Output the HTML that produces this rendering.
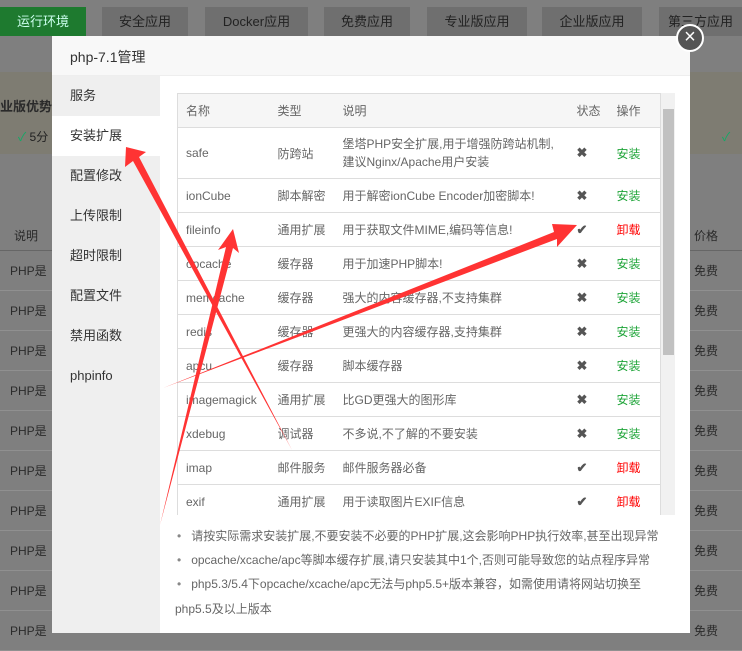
<!DOCTYPE html><html><head><meta charset="utf-8"><style>
*{margin:0;padding:0;box-sizing:border-box}
body{width:742px;height:651px;overflow:hidden;position:relative;background:#7f7f7f;font-family:"Liberation Sans","Noto Sans CJK SC",sans-serif;font-size:12px;color:#555}
.tab{position:absolute;top:7px;height:29px;background:#6f6f6f;color:#222;font-size:13px;text-align:center;line-height:29px}
.bg{position:absolute;color:#2a2a2a;font-size:12px}
.ln{position:absolute;left:0;width:742px;height:1px;background:#909090}
.modal{position:absolute;left:52px;top:36px;width:638px;height:597px;background:#fff}
.hd{height:40px;line-height:42px;padding-left:18px;font-size:14px;color:#333;border-bottom:1px solid #eee;background:#f8f8f8}
.side{position:absolute;left:0;top:40px;width:108px;height:557px;background:#efefef}
.side div{height:40px;line-height:40px;padding-left:18px;font-size:13px;color:#333}
.side .on{background:#fff}
.tw{position:absolute;left:125px;top:57px;width:498px;height:422px;overflow:hidden}
table{border-collapse:collapse;width:484px;border:1px solid #ddd;table-layout:fixed}
td{border-top:1px solid #ddd;padding:0 8px;height:34px;color:#666;font-size:12px;white-space:nowrap;overflow:visible}
tr.h td{background:#f6f6f6;height:34px;border-top:none}
.g{color:#20a53a}.r{color:#f00}.x{color:#555;font-size:13px;font-weight:bold}
.sb{position:absolute;left:484px;top:0;width:14px;height:422px;background:#f1f1f1}
.th{position:absolute;left:2px;top:16px;width:11px;height:246px;background:#c1c1c1}
ul{position:absolute;left:122px;top:488px;width:500px;list-style:none;color:#666;font-size:12px;line-height:24px}
li:before{content:"•";margin:0 10px 0 3px;color:#888}
</style></head><body>
<div class="tab" style="left:0;width:86px;background:#1e7a2f;color:#cfe">运行环境</div>
<div class="tab" style="left:102px;width:86px">安全应用</div>
<div class="tab" style="left:205px;width:103px">Docker应用</div>
<div class="tab" style="left:324px;width:86px">免费应用</div>
<div class="tab" style="left:427px;width:100px">专业版应用</div>
<div class="tab" style="left:542px;width:100px">企业版应用</div>
<div class="tab" style="left:659px;width:83px">第三方应用</div>
<div style="position:absolute;left:0;top:72px;width:742px;height:82px;background:#7e7c72"></div>
<div class="bg" style="left:0;top:96px;font-size:13px;font-weight:bold">业版优势</div>
<div class="bg" style="left:18px;top:128px;color:#222"><span style="color:#1a6">✓</span> 5分</div>
<div class="bg" style="left:722px;top:128px"><span style="color:#1a6">✓</span></div>
<div class="bg" style="left:14px;top:227px">说明</div><div class="bg" style="left:694px;top:227px">价格</div>
<div class="ln" style="top:250px;background:#666"></div>
<div class="ln" style="top:290px"></div><div class="ln" style="top:330px"></div><div class="ln" style="top:370px"></div><div class="ln" style="top:410px"></div><div class="ln" style="top:450px"></div><div class="ln" style="top:490px"></div><div class="ln" style="top:530px"></div><div class="ln" style="top:570px"></div><div class="ln" style="top:610px"></div><div class="ln" style="top:650px"></div>
<div class="bg" style="left:10px;top:262px">PHP是</div><div class="bg" style="left:694px;top:262px">免费</div>
<div class="bg" style="left:10px;top:302px">PHP是</div><div class="bg" style="left:694px;top:302px">免费</div>
<div class="bg" style="left:10px;top:342px">PHP是</div><div class="bg" style="left:694px;top:342px">免费</div>
<div class="bg" style="left:10px;top:382px">PHP是</div><div class="bg" style="left:694px;top:382px">免费</div>
<div class="bg" style="left:10px;top:422px">PHP是</div><div class="bg" style="left:694px;top:422px">免费</div>
<div class="bg" style="left:10px;top:462px">PHP是</div><div class="bg" style="left:694px;top:462px">免费</div>
<div class="bg" style="left:10px;top:502px">PHP是</div><div class="bg" style="left:694px;top:502px">免费</div>
<div class="bg" style="left:10px;top:542px">PHP是</div><div class="bg" style="left:694px;top:542px">免费</div>
<div class="bg" style="left:10px;top:582px">PHP是</div><div class="bg" style="left:694px;top:582px">免费</div>
<div class="bg" style="left:10px;top:622px">PHP是</div><div class="bg" style="left:694px;top:622px">免费</div>
<div class="modal">
<div class="hd">php-7.1管理</div>
<div class="side"><div>服务</div><div class="on">安装扩展</div><div>配置修改</div><div>上传限制</div><div>超时限制</div><div>配置文件</div><div>禁用函数</div><div>phpinfo</div></div>
<div class="tw"><table>
<colgroup><col style="width:92px"><col style="width:65px"><col><col style="width:40px"><col style="width:52px"></colgroup>
<tr class="h"><td>名称</td><td>类型</td><td>说明</td><td>状态</td><td>操作</td></tr>
<tr><td style="height:51px">safe</td><td>防跨站</td><td style="line-height:18px">堡塔PHP安全扩展,用于增强防跨站机制,<br>建议Nginx/Apache用户安装</td><td class="x">✖</td><td class="g">安装</td></tr>
<tr><td>ionCube</td><td>脚本解密</td><td>用于解密ionCube Encoder加密脚本!</td><td class="x">✖</td><td class="g">安装</td></tr>
<tr><td>fileinfo</td><td>通用扩展</td><td>用于获取文件MIME,编码等信息!</td><td class="x">✔</td><td class="r">卸载</td></tr>
<tr><td>opcache</td><td>缓存器</td><td>用于加速PHP脚本!</td><td class="x">✖</td><td class="g">安装</td></tr>
<tr><td>memcache</td><td>缓存器</td><td>强大的内容缓存器,不支持集群</td><td class="x">✖</td><td class="g">安装</td></tr>
<tr><td>redis</td><td>缓存器</td><td>更强大的内容缓存器,支持集群</td><td class="x">✖</td><td class="g">安装</td></tr>
<tr><td>apcu</td><td>缓存器</td><td>脚本缓存器</td><td class="x">✖</td><td class="g">安装</td></tr>
<tr><td>imagemagick</td><td>通用扩展</td><td>比GD更强大的图形库</td><td class="x">✖</td><td class="g">安装</td></tr>
<tr><td>xdebug</td><td>调试器</td><td>不多说,不了解的不要安装</td><td class="x">✖</td><td class="g">安装</td></tr>
<tr><td>imap</td><td>邮件服务</td><td>邮件服务器必备</td><td class="x">✔</td><td class="r">卸载</td></tr>
<tr><td>exif</td><td>通用扩展</td><td>用于读取图片EXIF信息</td><td class="x">✔</td><td class="r">卸载</td></tr>
</table><div class="sb"><div class="th"></div></div></div>
<ul><li>请按实际需求安装扩展,不要安装不必要的PHP扩展,这会影响PHP执行效率,甚至出现异常</li><li>opcache/xcache/apc等脚本缓存扩展,请只安装其中1个,否则可能导致您的站点程序异常</li><li>php5.3/5.4下opcache/xcache/apc无法与php5.5+版本兼容，如需使用请将网站切换至</li></ul>
<div style="position:absolute;left:123px;top:564px;color:#666;font-size:12px">php5.5及以上版本</div>
</div>
<div style="position:absolute;left:676px;top:24px;width:28px;height:28px;border-radius:50%;background:#555;border:2px solid #fff;color:#fff;text-align:center;line-height:23px;font-size:20px">×</div>
<svg width="742" height="651" style="position:absolute;left:0;top:0">
<g fill="#f33">
<polygon points="126,147 146,152 139,157 292,450 133,161 125,167"/>
<polygon points="233,229 239,253 233,248 160,525 226,247 218,250"/>
<polygon points="577,225 557,247 557,239 163,388 554,232 552,224"/>
</g></svg>
</body></html>
